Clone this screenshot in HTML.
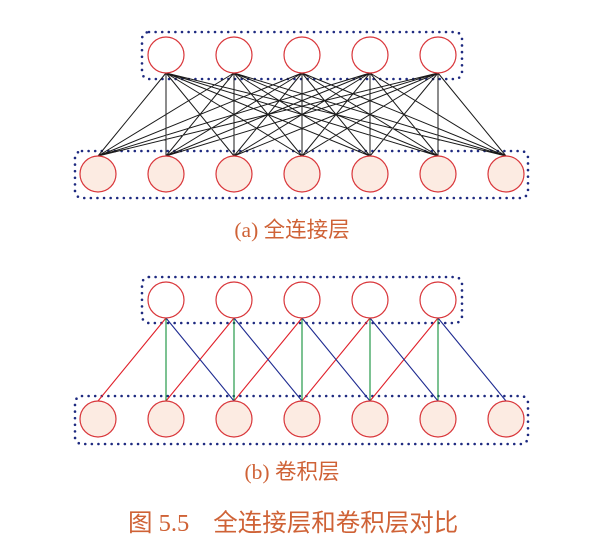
<!DOCTYPE html>
<html><head><meta charset="utf-8"><style>
html,body{margin:0;padding:0;background:#fff;width:592px;height:554px;overflow:hidden}
svg{display:block}
text{fill:#cf6236;font-family:"Liberation Serif","Noto Sans CJK SC",serif}
</style></head><body>
<svg width="592" height="554" viewBox="0 0 592 554" xmlns="http://www.w3.org/2000/svg">
<g fill="none" stroke="#1e2a80" stroke-width="2.6" stroke-linecap="round" stroke-dasharray="0 6.6">
<rect x="142" y="32" width="320" height="47" rx="7"/>
<rect x="75" y="151" width="453" height="47" rx="7"/>
<rect x="142" y="277" width="320" height="46" rx="7"/>
<rect x="75" y="396" width="453" height="48" rx="7"/>
</g>
<g stroke="#1a1a1a" stroke-width="1">
<path d="
M166 73L98 156M166 73L166 156M166 73L234 156M166 73L302 156M166 73L370 156M166 73L438 156M166 73L506 156
M234 73L98 156M234 73L166 156M234 73L234 156M234 73L302 156M234 73L370 156M234 73L438 156M234 73L506 156
M302 73L98 156M302 73L166 156M302 73L234 156M302 73L302 156M302 73L370 156M302 73L438 156M302 73L506 156
M370 73L98 156M370 73L166 156M370 73L234 156M370 73L302 156M370 73L370 156M370 73L438 156M370 73L506 156
M438 73L98 156M438 73L166 156M438 73L234 156M438 73L302 156M438 73L370 156M438 73L438 156M438 73L506 156"/>
</g>
<g stroke-width="1.1">
<path stroke="#e0202a" d="M166 318L98 401M234 318L166 401M302 318L234 401M370 318L302 401M438 318L370 401"/>
<path stroke="#12903a" d="M166 318L166 401M234 318L234 401M302 318L302 401M370 318L370 401M438 318L438 401"/>
<path stroke="#1e2a90" d="M166 318L234 401M234 318L302 401M302 318L370 401M370 318L438 401M438 318L506 401"/>
</g>
<g fill="#fff" stroke="#d9363a" stroke-width="1.2">
<circle cx="166" cy="55" r="18"/><circle cx="234" cy="55" r="18"/><circle cx="302" cy="55" r="18"/><circle cx="370" cy="55" r="18"/><circle cx="438" cy="55" r="18"/>
<circle cx="166" cy="300" r="18"/><circle cx="234" cy="300" r="18"/><circle cx="302" cy="300" r="18"/><circle cx="370" cy="300" r="18"/><circle cx="438" cy="300" r="18"/>
</g>
<g fill="#fcebe2" stroke="#d9363a" stroke-width="1.2">
<circle cx="98" cy="174" r="18"/><circle cx="166" cy="174" r="18"/><circle cx="234" cy="174" r="18"/><circle cx="302" cy="174" r="18"/><circle cx="370" cy="174" r="18"/><circle cx="438" cy="174" r="18"/><circle cx="506" cy="174" r="18"/>
<circle cx="98" cy="419" r="18"/><circle cx="166" cy="419" r="18"/><circle cx="234" cy="419" r="18"/><circle cx="302" cy="419" r="18"/><circle cx="370" cy="419" r="18"/><circle cx="438" cy="419" r="18"/><circle cx="506" cy="419" r="18"/>
</g>
<text x="292" y="237" font-size="21.5" text-anchor="middle">(a) 全连接层</text>
<text x="292" y="479" font-size="21.5" text-anchor="middle">(b) 卷积层</text>
<text x="128" y="531" font-size="24.5">图 5.5<tspan dx="24">全连接层和卷积层对比</tspan></text>
</svg>
</body></html>
